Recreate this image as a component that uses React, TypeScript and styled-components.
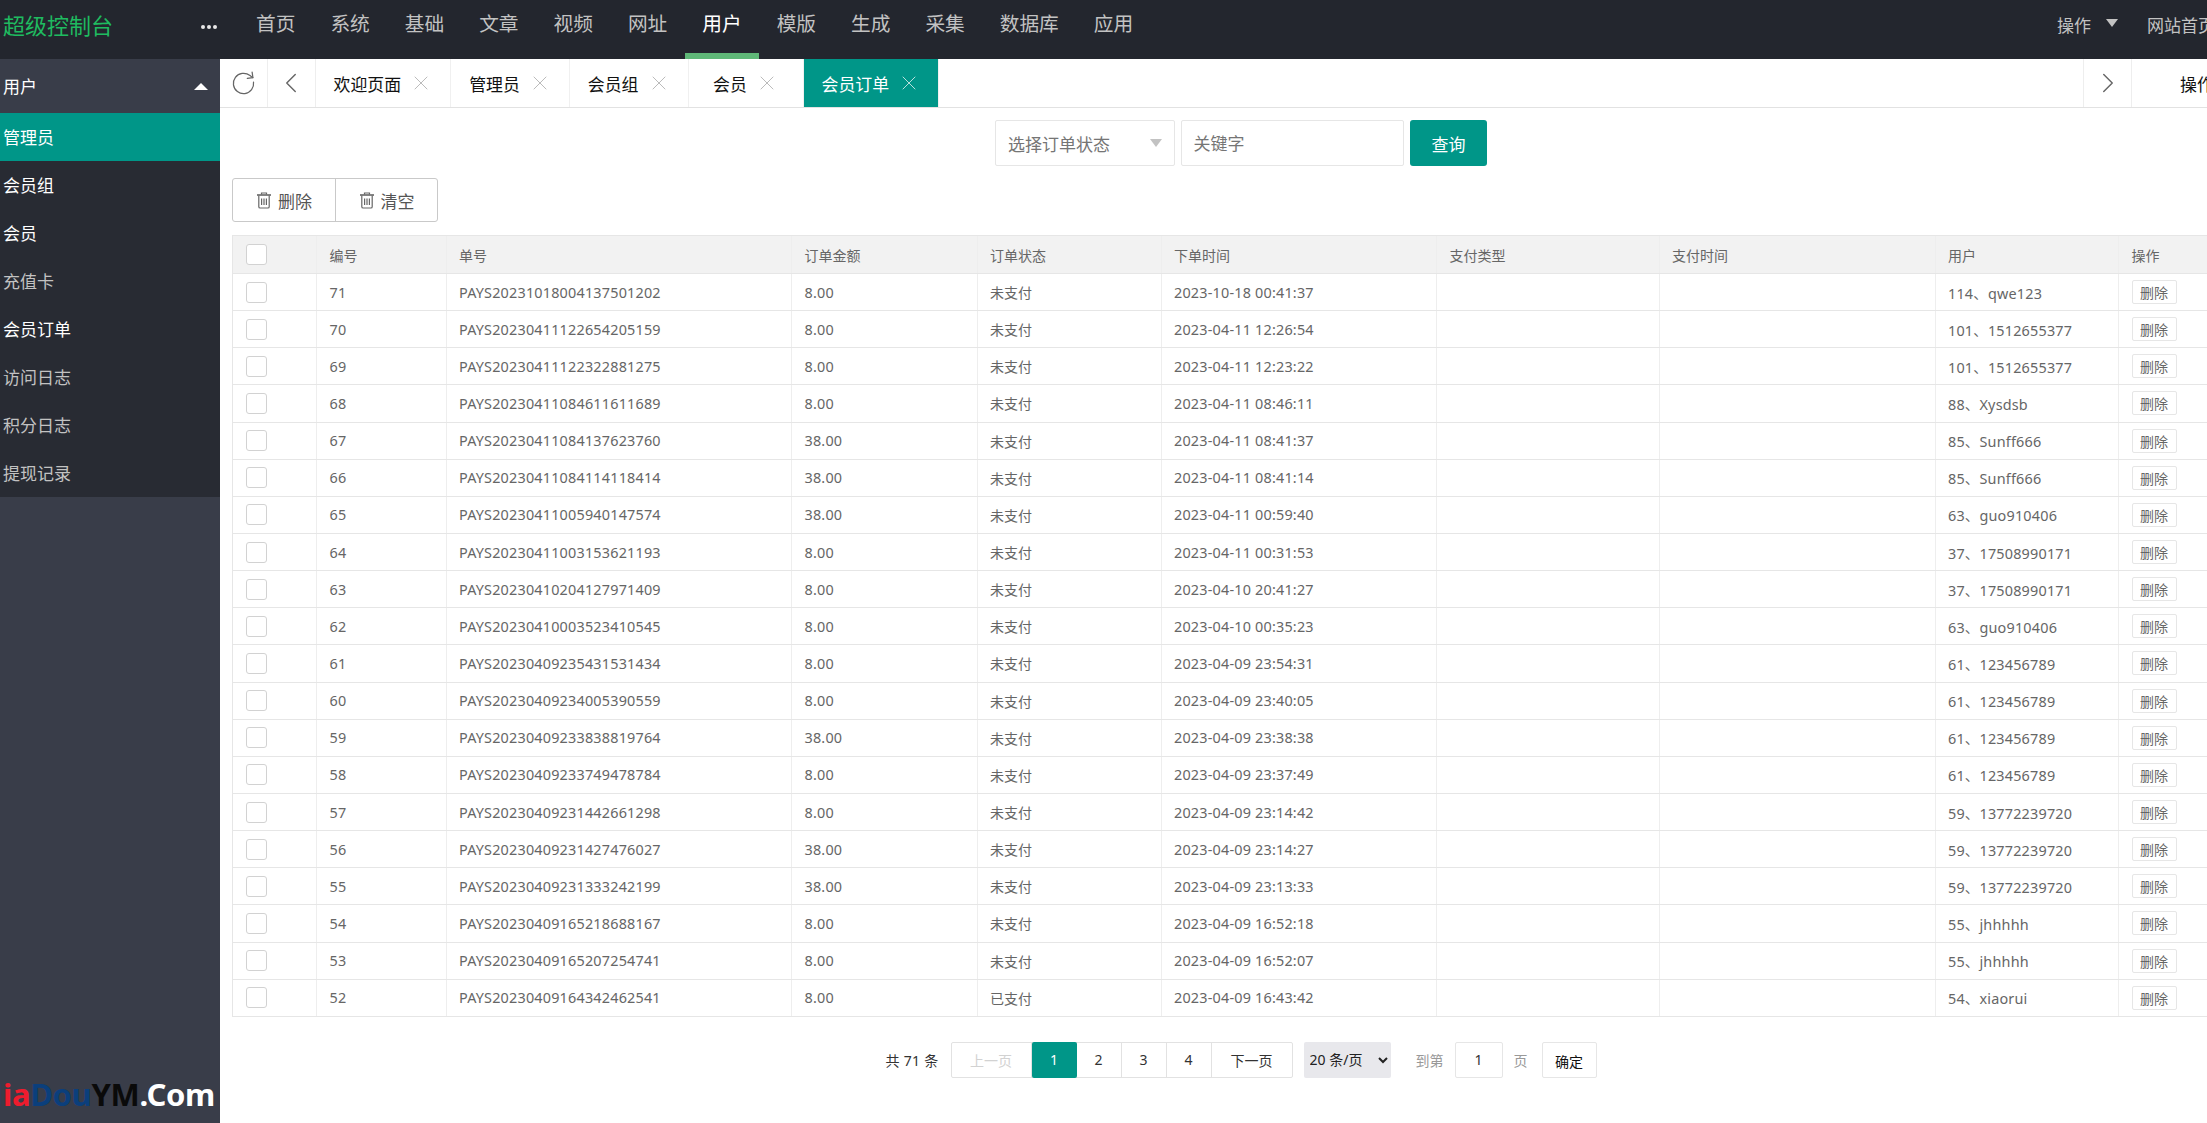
import styled, { createGlobalStyle } from "styled-components"
import { ChevronLeft, ChevronRight, RotateCw, X } from "lucide-react"

const navItems = ["首页", "系统", "基础", "文章", "视频", "网址", "用户", "模版", "生成", "采集", "数据库", "应用"]

const sideItems = [
  { label: "管理员", tone: "active" },
  { label: "会员组", tone: "light" },
  { label: "会员", tone: "light" },
  { label: "充值卡", tone: "dim" },
  { label: "会员订单", tone: "light" },
  { label: "访问日志", tone: "dim" },
  { label: "积分日志", tone: "dim" },
  { label: "提现记录", tone: "dim" },
]

const tabs = ["欢迎页面", "管理员", "会员组", "会员"]

const columns = ["编号", "单号", "订单金额", "订单状态", "下单时间", "支付类型", "支付时间", "用户", "操作"]

const orders = [
  ["71", "PAYS20231018004137501202", "8.00", "未支付", "2023-10-18 00:41:37", "114、qwe123"],
  ["70", "PAYS20230411122654205159", "8.00", "未支付", "2023-04-11 12:26:54", "101、1512655377"],
  ["69", "PAYS20230411122322881275", "8.00", "未支付", "2023-04-11 12:23:22", "101、1512655377"],
  ["68", "PAYS20230411084611611689", "8.00", "未支付", "2023-04-11 08:46:11", "88、Xysdsb"],
  ["67", "PAYS20230411084137623760", "38.00", "未支付", "2023-04-11 08:41:37", "85、Sunff666"],
  ["66", "PAYS20230411084114118414", "38.00", "未支付", "2023-04-11 08:41:14", "85、Sunff666"],
  ["65", "PAYS20230411005940147574", "38.00", "未支付", "2023-04-11 00:59:40", "63、guo910406"],
  ["64", "PAYS20230411003153621193", "8.00", "未支付", "2023-04-11 00:31:53", "37、17508990171"],
  ["63", "PAYS20230410204127971409", "8.00", "未支付", "2023-04-10 20:41:27", "37、17508990171"],
  ["62", "PAYS20230410003523410545", "8.00", "未支付", "2023-04-10 00:35:23", "63、guo910406"],
  ["61", "PAYS20230409235431531434", "8.00", "未支付", "2023-04-09 23:54:31", "61、123456789"],
  ["60", "PAYS20230409234005390559", "8.00", "未支付", "2023-04-09 23:40:05", "61、123456789"],
  ["59", "PAYS20230409233838819764", "38.00", "未支付", "2023-04-09 23:38:38", "61、123456789"],
  ["58", "PAYS20230409233749478784", "8.00", "未支付", "2023-04-09 23:37:49", "61、123456789"],
  ["57", "PAYS20230409231442661298", "8.00", "未支付", "2023-04-09 23:14:42", "59、13772239720"],
  ["56", "PAYS20230409231427476027", "38.00", "未支付", "2023-04-09 23:14:27", "59、13772239720"],
  ["55", "PAYS20230409231333242199", "38.00", "未支付", "2023-04-09 23:13:33", "59、13772239720"],
  ["54", "PAYS20230409165218688167", "8.00", "未支付", "2023-04-09 16:52:18", "55、jhhhhh"],
  ["53", "PAYS20230409165207254741", "8.00", "未支付", "2023-04-09 16:52:07", "55、jhhhhh"],
  ["52", "PAYS20230409164342462541", "8.00", "已支付", "2023-04-09 16:43:42", "54、xiaorui"],
]

const TrashIcon = () => (
  <svg width="16" height="17" viewBox="0 0 16 17" fill="none" stroke="#666" strokeWidth="1.2">
    <path d="M5.5 2.5V1h5v1.5" />
    <path d="M1 3h14" strokeWidth="1.6" />
    <path d="M2.8 3.5v11.2c0 .8.5 1.3 1.3 1.3h7.8c.8 0 1.3-.5 1.3-1.3V3.5" />
    <path d="M5.6 6.5v6.5M8 6.5v6.5M10.4 6.5v6.5" />
  </svg>
)

export default function App() {
  return (
    <Page>
      <GlobalStyle />
      <TopBar>
        <Brand>
          <Logo>超级控制台</Logo>
          <Dots>
            <i />
            <i />
            <i />
          </Dots>
        </Brand>
        {navItems.map((x) => (
          <NavItem key={x} $active={x === "用户"}>
            {x}
          </NavItem>
        ))}
        <TopRight>
          <span>操作</span>
          <DownCaret />
          <HomeLink>网站首页</HomeLink>
        </TopRight>
      </TopBar>

      <Body>
        <Sidebar>
          <SideHead>
            用户
            <UpCaret />
          </SideHead>
          {sideItems.map((x) => (
            <SideItem key={x.label} $tone={x.tone}>
              {x.label}
            </SideItem>
          ))}
          <Watermark>
            <b style={{ color: "#3a3a78" }}>J</b>
            <b style={{ color: "#ee1c2e" }}>ia</b>
            <b style={{ color: "#0b3f7c" }}>Dou</b>
            <b style={{ color: "#0a0a0a" }}>YM</b>
            <b style={{ color: "#ffffff" }}>.Com</b>
          </Watermark>
        </Sidebar>

        <Main>
          <TabBar>
            <IconCell>
              <RotateCw size={27} strokeWidth={1.1} color="#666" style={{ transform: "rotate(-8deg)" }} />
            </IconCell>
            <IconCell>
              <ChevronLeft size={34} strokeWidth={1} color="#666" />
            </IconCell>
            {tabs.map((x) => (
              <Tab key={x}>
                {x}
                <X size={24} strokeWidth={1} color="#bbb" />
              </Tab>
            ))}
            <Tab $active>
              会员订单
              <X size={24} strokeWidth={1} color="#b9e0dc" />
            </Tab>
            <TabEnd>
              <IconCell $left>
                <ChevronRight size={34} strokeWidth={1} color="#666" />
              </IconCell>
              <TabMenu>操作</TabMenu>
            </TabEnd>
          </TabBar>

          <FilterRow>
            <StatusSelect>
              选择订单状态
              <SelectCaret />
            </StatusSelect>
            <KeywordInput placeholder="关键字" readOnly />
            <SearchBtn>查询</SearchBtn>
          </FilterRow>

          <Toolbar>
            <ToolBtn>
              <TrashIcon />
              删除
            </ToolBtn>
            <ToolBtn>
              <TrashIcon />
              清空
            </ToolBtn>
          </Toolbar>

          <Table>
            <HeadRow>
              <Cell>
                <Check />
              </Cell>
              {columns.map((x) => (
                <Cell key={x}>{x}</Cell>
              ))}
            </HeadRow>
            {orders.map((x) => (
              <Row key={x[0]}>
                <Cell>
                  <Check />
                </Cell>
                <DataCell>{x[0]}</DataCell>
                <DataCell>{x[1]}</DataCell>
                <DataCell>{x[2]}</DataCell>
                <Cell>{x[3]}</Cell>
                <DataCell>{x[4]}</DataCell>
                <Cell />
                <Cell />
                <DataCell>{x[5]}</DataCell>
                <Cell>
                  <RowBtn>删除</RowBtn>
                </Cell>
              </Row>
            ))}
          </Table>

          <Pager>
            <TotalText>共 71 条</TotalText>
            <PageGroup>
              <PageBtn $wide $disabled>
                上一页
              </PageBtn>
              <PageBtn $current>1</PageBtn>
              <PageBtn>2</PageBtn>
              <PageBtn>3</PageBtn>
              <PageBtn>4</PageBtn>
              <PageBtn $wide>下一页</PageBtn>
            </PageGroup>
            <SizeSelect defaultValue="20">
              <option value="20">20 条/页</option>
            </SizeSelect>
            <PagerText>到第</PagerText>
            <JumpInput defaultValue="1" />
            <PagerText>页</PagerText>
            <ConfirmBtn>确定</ConfirmBtn>
          </Pager>
        </Main>
      </Body>
    </Page>
  )
}

const GlobalStyle = createGlobalStyle`
  html, body {
    margin: 0;
    height: 100%;
    overflow: hidden;
    background: #fff;
  }
  * {
    box-sizing: border-box;
  }
  body {
    font-family: "Noto Sans", "Noto Sans CJK SC", sans-serif;
    font-size: 14px;
    color: #666;
  }
`

const Page = styled.div`
  width: 2262px;
  height: 1123px;
  display: flex;
  flex-direction: column;
`

const TopBar = styled.div`
  height: 59px;
  flex: none;
  display: flex;
  background: #23262e;
`

const Brand = styled.div`
  width: 238.5px;
  height: 48px;
  display: flex;
  align-items: center;
  justify-content: space-between;
  padding: 0 22px 0 3px;
`

const Logo = styled.div`
  font-size: 22px;
  color: #1fbb60;
`

const Dots = styled.div`
  display: flex;
  gap: 2px;
  margin-top: 6px;

  i {
    width: 4px;
    height: 4px;
    border-radius: 50%;
    background: #e8e8e8;
  }
`

const NavItem = styled.div<{ $active?: boolean }>`
  height: 59px;
  padding: 0 17.5px;
  line-height: 48px;
  font-size: 19.7px;
  color: ${(p) => (p.$active ? "#fff" : "#c2c2c2")};
  border-bottom: ${(p) => (p.$active ? "6px solid #5fb878" : "none")};
`

const TopRight = styled.div`
  margin-left: auto;
  height: 48px;
  display: flex;
  align-items: center;
  padding-right: 47px;
  font-size: 17px;
  color: #c2c2c2;
`

const DownCaret = styled.i`
  margin-left: 15px;
  margin-top: -2px;
  border-style: solid;
  border-width: 8px 6.5px 0;
  border-color: #c2c2c2 transparent transparent;
`

const HomeLink = styled.span`
  margin-left: 29px;
`

const Body = styled.div`
  flex: 1;
  display: flex;
  min-height: 0;
`

const Sidebar = styled.div`
  position: relative;
  width: 220px;
  flex: none;
  background: #393d49;
  overflow: hidden;
`

const SideHead = styled.div`
  height: 54px;
  display: flex;
  align-items: center;
  justify-content: space-between;
  padding: 0 12px 2px 3px;
  font-size: 17px;
  color: #fff;
`

const UpCaret = styled.i`
  margin-top: 2px;
  border-style: solid;
  border-width: 0 7px 7px;
  border-color: transparent transparent #fff;
`

const SideItem = styled.div<{ $tone: string }>`
  height: 48px;
  line-height: 50px;
  padding-left: 3px;
  font-size: 17px;
  background: ${(p) => (p.$tone === "active" ? "#009688" : "#282b33")};
  color: ${(p) => (p.$tone === "dim" ? "#c2c2c2" : "#fff")};
`

const Watermark = styled.div`
  position: absolute;
  right: 5px;
  bottom: 9px;
  font-size: 31px;
  line-height: 40px;
  white-space: nowrap;
  letter-spacing: -0.3px;
`

const Main = styled.div`
  flex: 1;
  min-width: 0;
  display: flex;
  flex-direction: column;
  align-items: center;
`

const TabBar = styled.div`
  width: 100%;
  height: 49px;
  flex: none;
  display: flex;
  border-bottom: 1px solid #e2e2e2;
`

const IconCell = styled.div<{ $left?: boolean }>`
  width: 47.8px;
  flex: none;
  display: flex;
  align-items: center;
  justify-content: center;
  border-right: ${(p) => (p.$left ? "none" : "1px solid #eee")};
  border-left: ${(p) => (p.$left ? "1px solid #eee" : "none")};
`

const Tab = styled.div<{ $active?: boolean }>`
  min-width: 115px;
  display: flex;
  align-items: center;
  justify-content: center;
  gap: 8px;
  padding: 0 17px 0 18px;
  font-size: 16.9px;
  color: ${(p) => (p.$active ? "#fff" : "#111")};
  background: ${(p) => (p.$active ? "#009688" : "transparent")};
  border-right: 1px solid #f0f0f0;
`

const TabEnd = styled.div`
  margin-left: auto;
  display: flex;
`

const TabMenu = styled.div`
  width: 131px;
  display: flex;
  align-items: center;
  justify-content: center;
  font-size: 16.9px;
  color: #111;
  border-left: 1px solid #eee;
`

const FilterRow = styled.div`
  margin-top: 12px;
  display: flex;
  gap: 6px;
  height: 46px;
  flex: none;
`

const StatusSelect = styled.div`
  width: 179.5px;
  padding-left: 12px;
  display: flex;
  align-items: center;
  justify-content: space-between;
  padding-right: 12px;
  font-size: 17px;
  color: #757575;
  border: 1px solid #e6e6e6;
  border-radius: 2px;
`

const SelectCaret = styled.i`
  border-style: solid;
  border-width: 8px 6.5px 0;
  border-color: #c2c2c2 transparent transparent;
`

const KeywordInput = styled.input`
  width: 223.5px;
  padding: 0 12px;
  font: inherit;
  font-size: 17px;
  border: 1px solid #e6e6e6;
  border-radius: 2px;
  outline: none;

  &::placeholder {
    color: #757575;
  }
`

const SearchBtn = styled.button`
  width: 77px;
  font: inherit;
  font-size: 17px;
  color: #fff;
  background: #009688;
  border: none;
  border-radius: 3px;
`

const Toolbar = styled.div`
  align-self: flex-start;
  margin: 12px 0 0 12px;
  height: 44px;
  flex: none;
  display: flex;
  border: 1px solid #c9c9c9;
  border-radius: 3px;
`

const ToolBtn = styled.div`
  width: 102px;
  display: flex;
  align-items: center;
  justify-content: center;
  gap: 6px;
  font-size: 17px;
  color: #555;

  & + & {
    border-left: 1px solid #c9c9c9;
  }
`

const Table = styled.div`
  align-self: flex-start;
  margin: 13px 0 0 12px;
  width: 2018px;
  flex: none;
  border-top: 1px solid #e6e6e6;
  border-left: 1px solid #e6e6e6;
  border-right: 1px solid #e6e6e6;
`

const Row = styled.div`
  height: 37.15px;
  display: grid;
  grid-template-columns: 84px 129.5px 345.5px 185.5px 184px 275.5px 222.5px 276px 183.5px 1fr;
  border-bottom: 1px solid #e6e6e6;
`

const HeadRow = styled(Row)`
  height: 38px;
  background: #f2f2f2;
`

const Cell = styled.div`
  display: flex;
  align-items: center;
  padding-left: 12.5px;
  min-width: 0;
  white-space: nowrap;
  font-size: 14px;
  color: #666;
  border-right: 1px solid #eee;

  &:last-child {
    border-right: none;
  }
`

const DataCell = styled(Cell)`
  font-size: 14.4px;
  letter-spacing: 0.2px;
`

const Check = styled.div`
  width: 21px;
  height: 21px;
  background: #fff;
  border: 1px solid #d2d2d2;
  border-radius: 3px;
`

const RowBtn = styled.div`
  width: 45px;
  height: 24px;
  display: flex;
  align-items: center;
  justify-content: center;
  font-size: 14px;
  color: #666;
  background: #fff;
  border: 1px solid #e6e6e6;
  border-radius: 2px;
`

const Pager = styled.div`
  margin-top: 25px;
  height: 36px;
  flex: none;
  display: flex;
  align-items: center;
`

const TotalText = styled.span`
  font-size: 14px;
  letter-spacing: 0.3px;
  color: #333;
  margin-right: 12px;
`

const PagerText = styled.span`
  font-size: 14px;
  color: #999;
  margin: 0 11px;
`

const PageGroup = styled.div`
  display: flex;
  height: 36px;
  border: 1px solid #e2e2e2;
  border-radius: 2px;
  margin-right: 11px;
`

const PageBtn = styled.div<{ $wide?: boolean; $current?: boolean; $disabled?: boolean }>`
  width: ${(p) => (p.$wide ? "80px" : "45px")};
  margin: ${(p) => (p.$current ? "-1px 0" : "0")};
  display: flex;
  align-items: center;
  justify-content: center;
  font-size: 14px;
  color: ${(p) => (p.$current ? "#fff" : p.$disabled ? "#d2d2d2" : "#333")};
  background: ${(p) => (p.$current ? "#009688" : "transparent")};
  border-radius: ${(p) => (p.$current ? "2px" : "0")};
  border-right: ${(p) => (p.$current ? "none" : "1px solid #e2e2e2")};

  &:last-child {
    border-right: none;
  }
`

const SizeSelect = styled.select`
  width: 87px;
  height: 36px;
  margin-right: 14px;
  padding: 0 0 0 2px;
  font: inherit;
  font-size: 14px;
  color: #222;
  background: #e8e8ec;
  border: none;
  border-radius: 2px;
  outline: none;
`

const JumpInput = styled.input`
  width: 48px;
  height: 36px;
  font: inherit;
  font-size: 14px;
  color: #333;
  text-align: center;
  border: 1px solid #e6e6e6;
  border-radius: 2px;
  outline: none;
`

const ConfirmBtn = styled.button`
  width: 55px;
  height: 36px;
  margin-left: 3px;
  padding: 2px 0 0;
  font: inherit;
  font-size: 14px;
  color: #111;
  background: #fff;
  border: 1px solid #e6e6e6;
  border-radius: 2px;
`
